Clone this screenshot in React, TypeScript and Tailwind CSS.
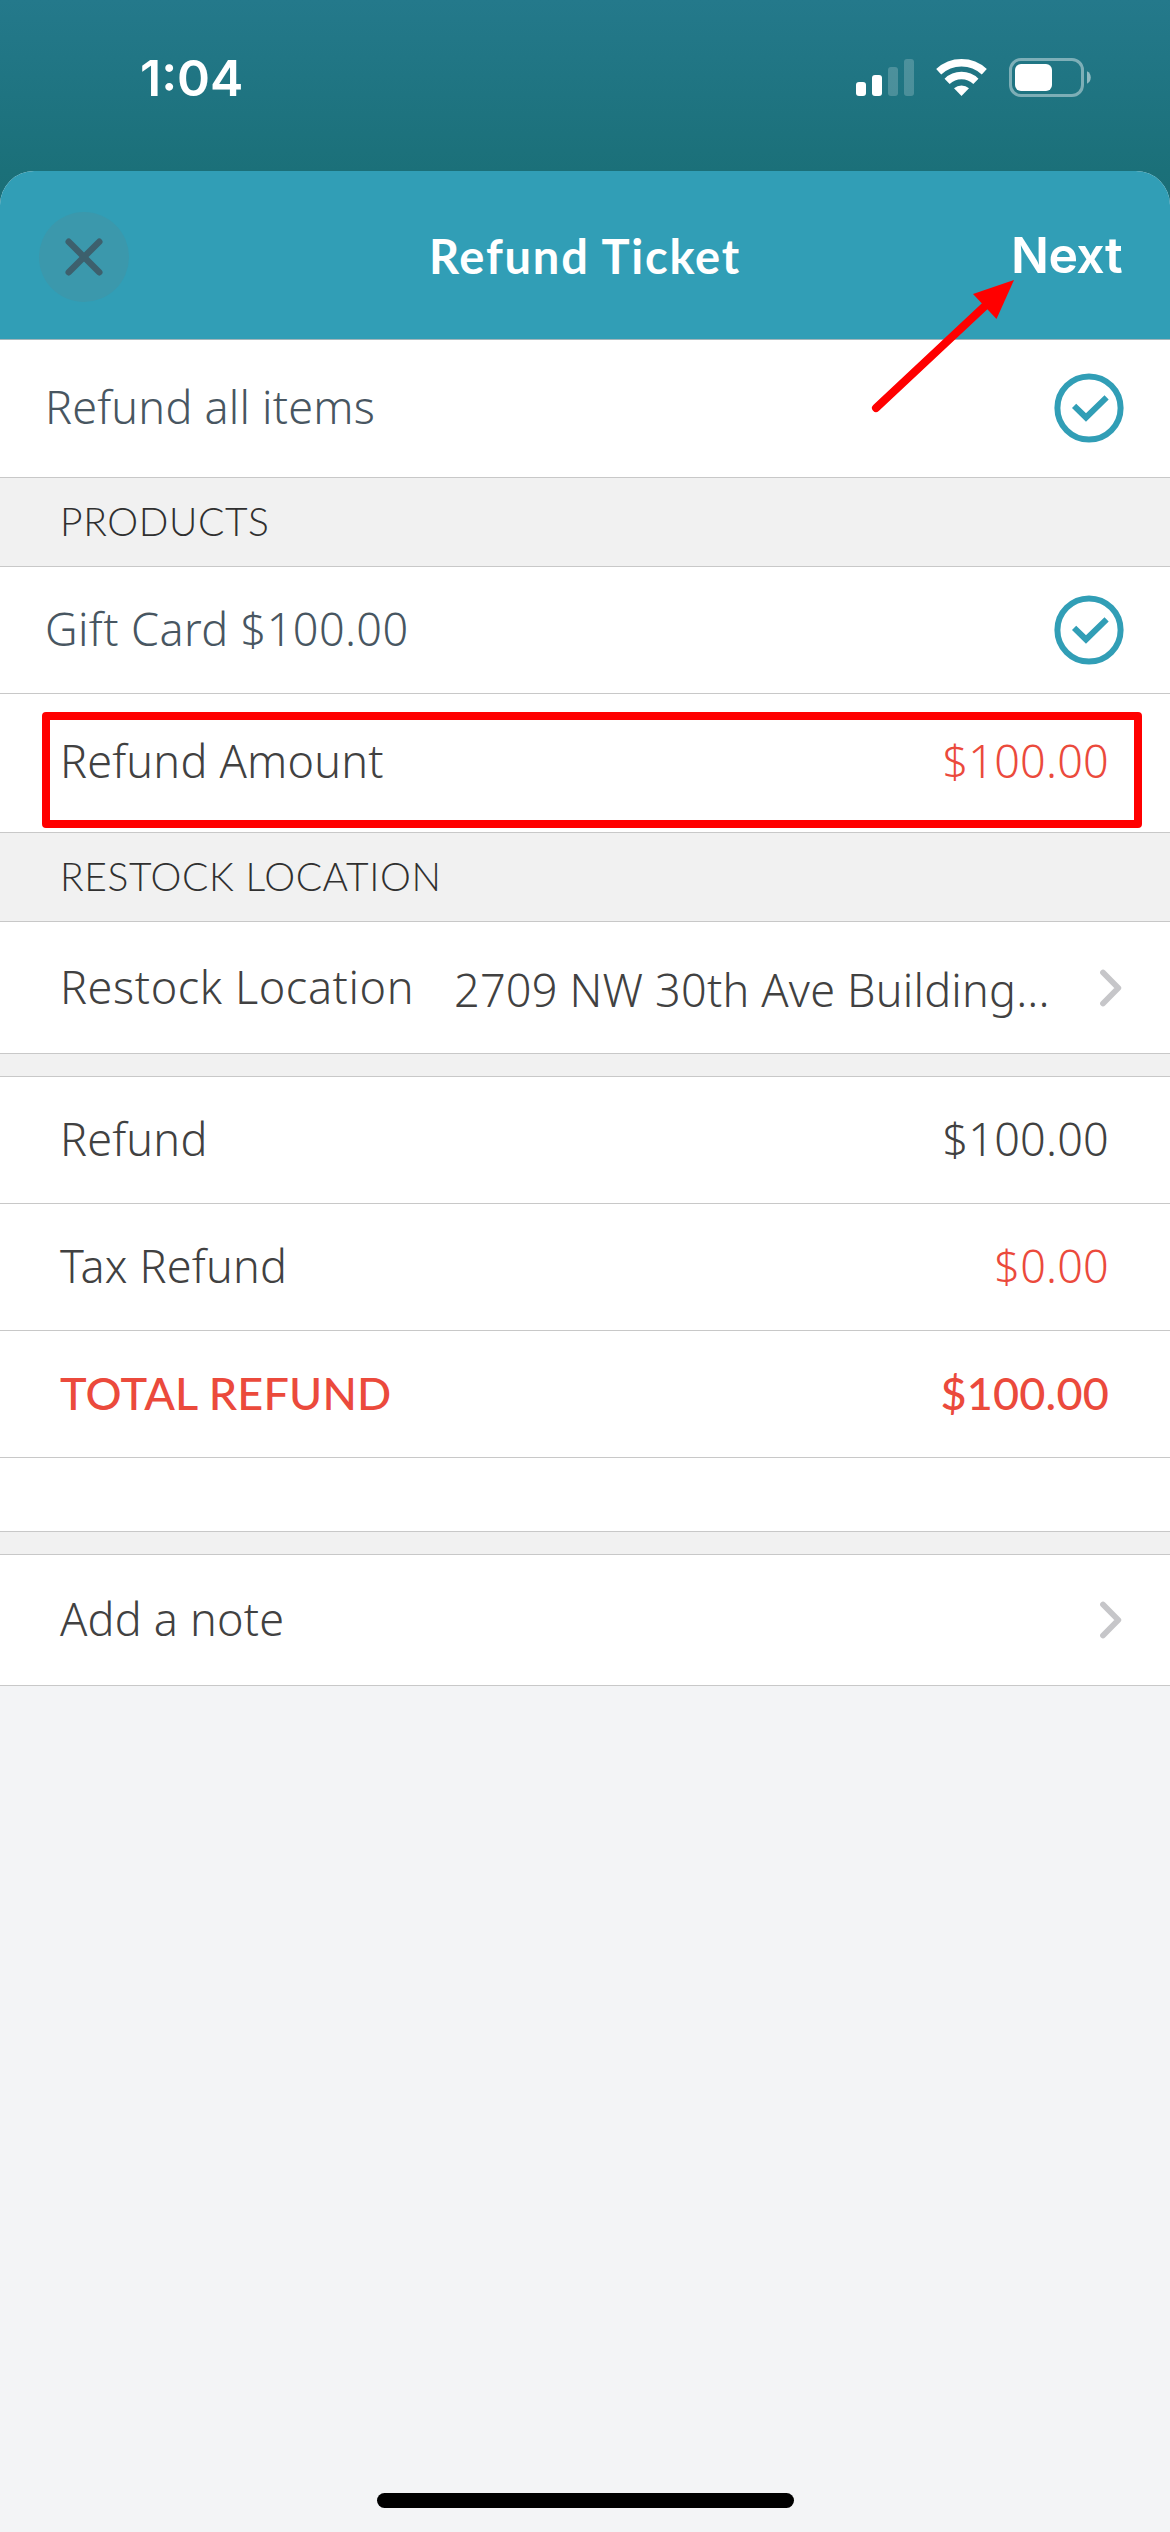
import React from 'react';

type Tone = 'dark' | 'red';

const StatusBar: React.FC = () => (
  <div className="h-[171px] shrink-0 pt-[46px] pl-[140px] pr-[79px] flex items-start justify-between">
    <span className="font-['Inter',sans-serif] font-semibold text-[50px] leading-[64px] text-white">1:04</span>
    <div className="flex items-start pt-3">
      {/* signal */}
      <svg className="w-[58px] h-10" viewBox="0 0 58 40" fill="white">
        <rect x="0" y="24" width="10" height="14" rx="3" />
        <rect x="16" y="17" width="10" height="21" rx="3" />
        <rect x="32" y="9" width="10" height="29" rx="3" opacity="0.2" />
        <rect x="48" y="1" width="10" height="37" rx="3" opacity="0.2" />
      </svg>
      {/* wifi */}
      <svg className="w-[51px] h-10 ml-[22px]" viewBox="0 0 51 40" fill="none" stroke="white" strokeWidth="7.4">
        <path d="M2.7 13.8 A33.4 33.4 0 0 1 48.3 13.8" />
        <path d="M11.1 23.4 A20.7 20.7 0 0 1 39.9 23.4" />
        <path d="M18 30.2 A11.5 11.5 0 0 1 33 30.2 L25.5 38 Z" fill="white" stroke="none" />
      </svg>
      {/* battery */}
      <svg className="w-[82px] h-10 ml-[22px]" viewBox="0 0 82 40">
        <rect x="1.5" y="1.5" width="72" height="36" rx="10.5" fill="none" stroke="white" strokeOpacity="0.42" strokeWidth="3" />
        <rect x="6" y="6" width="37" height="27" rx="6" fill="white" />
        <path d="M78 13.3 C83 15.5 83 23.5 78 25.7 Z" fill="white" opacity="0.5" />
      </svg>
    </div>
  </div>
);

const CheckCircle: React.FC = () => (
  <svg className="w-[70px] h-[70px] shrink-0" viewBox="-35 -35 70 70" fill="none" stroke="#319eb6">
    <circle r="31.6" strokeWidth="6" />
    <path d="M-14.9 -2.2 L-3 9.5 L17.6 -10.6" strokeWidth="6" />
  </svg>
);

const Chevron: React.FC = () => (
  <svg className="w-[23px] h-[38px] shrink-0" viewBox="0 0 23 38" fill="none" stroke="#c6c6c9" strokeWidth="5.8" strokeLinecap="round" strokeLinejoin="round">
    <path d="M4 3.5 L19.3 19 L4 34.5" />
  </svg>
);

const SectionHeader: React.FC<{ title: string }> = ({ title }) => (
  <div className="h-[89px] border-b border-[#c8c8c8] bg-[#f1f1f1] pl-[60px] pb-px flex items-center">
    <h2 className="font-['Lato',sans-serif] font-light text-[39px] leading-none tracking-[0.6px] text-[#303030]">{title}</h2>
  </div>
);

const SelectRow: React.FC<{ label: string; className: string }> = ({ label, className }) => (
  <div className={`border-b border-[#c8c8c8] bg-white pl-[45px] pr-[46px] flex items-center justify-between ${className}`}>
    <span className="text-[#485661] pb-0.5">{label}</span>
    <CheckCircle />
  </div>
);

const AmountRow: React.FC<{ label: string; value: string; tone?: Tone; total?: boolean }> = ({ label, value, tone = 'dark', total }) => (
  <div
    className={`h-[127px] border-b border-[#c8c8c8] bg-white pl-[60px] pr-[61px] pb-0.5 flex items-center justify-between ${
      total ? "font-['Lato',sans-serif] font-medium text-[#eb4a3c]" : ''
    }`}
  >
    <span>{label}</span>
    <span className={tone === 'red' ? 'text-[#eb4a3c]' : ''}>{value}</span>
  </div>
);

const Gap = () => <div className="h-[23px] border-b border-[#c8c8c8] bg-[#f1f1f1]" />;

export default function App() {
  return (
    <div className="relative w-[1170px] h-[2532px] overflow-hidden flex flex-col bg-[linear-gradient(#24798b_0px,#1b7079_171px,#1b6d76_220px,#f3f4f6_221px)]">
      <StatusBar />

      <div className="grow flex flex-col rounded-t-[34px] overflow-hidden bg-[#f3f4f6] font-['Noto_Sans',sans-serif] font-light text-[45px] leading-[60px] tracking-[0.2px] text-[#414141]">
        <header className="h-[169px] shrink-0 bg-[#319eb6] border-b border-[#a3b5ba] px-[39px] grid grid-cols-[1fr_auto_1fr] items-center text-white">
          <button className="mt-[3px] w-[90px] h-[90px] rounded-full bg-[#3b98ac] flex items-center justify-center">
            <svg className="w-[38px] h-[38px]" viewBox="-19 -19 38 38" stroke="#3d606d" strokeWidth="6.4" strokeLinecap="round">
              <path d="M-15.3 -15.3 L15.3 15.3 M15.3 -15.3 L-15.3 15.3" />
            </svg>
          </button>
          <h1 className="pt-px font-['Lato',sans-serif] font-bold text-[47px] tracking-[1.8px]">Refund Ticket</h1>
          <button className="mr-[9px] justify-self-end font-['Inter',sans-serif] font-semibold text-[50px] tracking-[-0.6px]">Next</button>
        </header>

        <SelectRow label="Refund all items" className="h-[138px] pb-0.5" />

        <SectionHeader title="PRODUCTS" />
        <SelectRow label="Gift Card $100.00" className="h-[127px] tracking-[0.4px]" />
        <div className="relative h-[139px] border-b border-[#c8c8c8] bg-white pl-[60px] pr-[61px] pb-1 flex items-center justify-between">
          <span>Refund Amount</span>
          <span className="text-[#eb4a3c]">$100.00</span>
          {/* highlight */}
          <div className="absolute left-[42px] top-[18px] w-[1100px] h-[116px] border-8 border-[#ff0000] rounded-[4px]" />
        </div>

        <SectionHeader title="RESTOCK LOCATION" />
        <div className="h-[132px] border-b border-[#c8c8c8] bg-white pl-[60px] pr-12 flex items-center">
          <span className="pb-0.5 w-[394px] whitespace-nowrap tracking-[0.6px]">Restock Location</span>
          <span className="pt-1 grow whitespace-nowrap">2709 NW 30th Ave Building...</span>
          <Chevron />
        </div>
        <Gap />

        <AmountRow label="Refund" value="$100.00" />
        <AmountRow label="Tax Refund" value="$0.00" tone="red" />
        <AmountRow label="TOTAL REFUND" value="$100.00" tone="red" total />
        <div className="h-[74px] border-b border-[#c8c8c8] bg-white" />
        <Gap />

        <div className="h-[131px] border-b border-[#c8c8c8] bg-white pl-[60px] pr-12 flex items-center justify-between">
          <span className="pb-0.5">Add a note</span>
          <Chevron />
        </div>

        <div className="mt-auto mb-6 mx-auto w-[417px] h-[15px] rounded-full bg-black" />
      </div>

      {/* arrow pointing at Next */}
      <svg className="absolute left-[860px] top-[270px] w-[170px] h-[150px]" viewBox="860 270 170 150">
        <path d="M876 408 L986 305" stroke="#ff0000" strokeWidth="8" strokeLinecap="round" />
        <path d="M1014 280 L973 294 L996.5 319 Z" fill="#ff0000" />
      </svg>
    </div>
  );
}
